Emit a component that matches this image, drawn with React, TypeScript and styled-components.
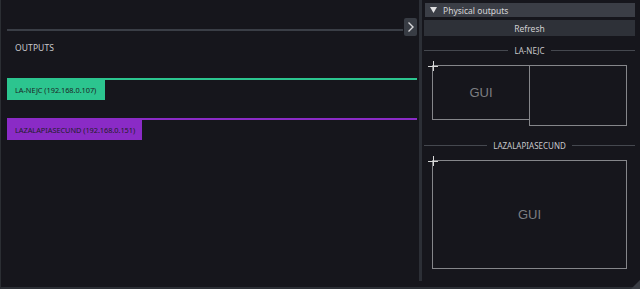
import React from "react";
import styled, { createGlobalStyle } from "styled-components";

const Global = createGlobalStyle`
  html, body { margin: 0; padding: 0; background: #16161c; }
  body { font-family: "Noto Sans", "DejaVu Sans", sans-serif; }
  * { box-sizing: border-box; }
`;

const Window = styled.div`
  width: 640px;
  height: 289px;
  background: #16161c;
  display: flex;
  flex-direction: column;
  overflow: hidden;
  border-left: 1px solid #2b2e33;
  position: relative;
`;

const Body = styled.div`
  flex: 1;
  display: flex;
  min-height: 0;
`;

const BottomEdge = styled.div`
  height: 2px;
  background: #2c2f35;
`;

const LeftPanel = styled.div`
  width: 418px;
  display: flex;
  flex-direction: column;
  padding-left: 6px;
`;

const TopRow = styled.div`
  display: flex;
  align-items: flex-end;
  margin-top: 18px;
  height: 18px;
`;

const TopLine = styled.div`
  flex: 1;
  height: 2px;
  background: #3a3e46;
  margin-bottom: 5px;
`;

const ChevronButton = styled.div`
  width: 13px;
  height: 18px;
  background: #383c44;
  border-radius: 2px;
  display: flex;
  align-items: center;
  justify-content: center;
  margin-left: 1px;
  margin-right: 2px;
`;

const SectionLabel = styled.div`
  color: #c9c9cc;
  font-size: 8.5px;
  letter-spacing: 0.1px;
  margin: 6px 0 0 8px;
  height: 12px;
  line-height: 12px;
`;

const OutputRow = styled.div<{ $color: string; $top: number }>`
  margin-top: ${(p) => p.$top}px;
  border-top: 2px solid ${(p) => p.$color};
  margin-right: 2px;
  display: flex;
`;

const OutputTag = styled.div<{ $color: string; $width: number }>`
  width: ${(p) => p.$width}px;
  height: 20px;
  background: ${(p) => p.$color};
  color: #1d1f26;
  font-family: "Noto Sans", sans-serif;
  font-size: 7.4px;
  letter-spacing: -0.05px;
  display: flex;
  align-items: center;
  padding-left: 8px;
  white-space: nowrap;
`;

const Separator = styled.div`
  width: 3px;
  height: 281px;
  background: #2c2f36;
`;

const RightPanel = styled.div`
  flex: 1;
  display: flex;
  flex-direction: column;
  padding: 3px 5px 0 2px;
`;

const Header = styled.div`
  height: 14px;
  background: #3b3e46;
  margin-left: 1px;
  display: flex;
  align-items: center;
  color: #d6d6d8;
  font-size: 8.5px;
  padding-left: 5px;
  gap: 6px;
`;

const RefreshButton = styled.div`
  margin-top: 3px;
  height: 16px;
  background: #2e3138;
  color: #d0d0d2;
  font-size: 8.5px;
  display: flex;
  align-items: center;
  justify-content: center;
`;

const Divider = styled.div<{ $top: number }>`
  margin-top: ${(p) => p.$top}px;
  display: flex;
  align-items: center;
  gap: 6px;
  color: #c8c8cb;
  font-size: 8px;
  height: 10px;
  &::before, &::after {
    content: "";
    flex: 1;
    height: 1px;
    background: #45484f;
  }
`;

const Canvas = styled.div<{ $height: number }>`
  position: relative;
  height: ${(p) => p.$height}px;
`;

const Screen = styled.div<{ $x: number; $y: number; $w: number; $h: number }>`
  position: absolute;
  left: ${(p) => p.$x}px;
  top: ${(p) => p.$y}px;
  width: ${(p) => p.$w}px;
  height: ${(p) => p.$h}px;
  border: 1.5px solid #85868a;
  display: flex;
  align-items: center;
  justify-content: center;
  color: #7d7e82;
  font-family: "Liberation Sans", Arial, sans-serif;
  font-size: 13px;
`;

const Cross = styled.div<{ $x: number; $y: number }>`
  position: absolute;
  left: ${(p) => p.$x - 5}px;
  top: ${(p) => p.$y - 5}px;
  width: 10px;
  height: 10px;
  &::before {
    content: "";
    position: absolute;
    left: 0;
    top: 5px;
    width: 10px;
    height: 1px;
    background: #d8d8d8;
  }
  &::after {
    content: "";
    position: absolute;
    left: 5px;
    top: 0;
    width: 1px;
    height: 10px;
    background: #d8d8d8;
  }
`;

const ResizeGrip = styled.div`
  position: absolute;
  right: 0;
  bottom: 0;
  width: 0;
  height: 0;
  border-left: 9px solid transparent;
  border-bottom: 9px solid #3a3d44;
`;

export default function App() {
  return (
    <>
      <Global />
      <Window>
        <Body>
          <LeftPanel>
            <TopRow>
              <TopLine />
              <ChevronButton>
                <svg width="8" height="12" viewBox="0 0 8 12">
                  <path d="M1.5 1.5 L6 6 L1.5 10.5" stroke="#d8d8da" strokeWidth="1.4" fill="none" />
                </svg>
              </ChevronButton>
            </TopRow>
            <SectionLabel>OUTPUTS</SectionLabel>
            <OutputRow $color="#2cc58f" $top={24}>
              <OutputTag $color="#2cc58f" $width={98}>LA-NEJC (192.168.0.107)</OutputTag>
            </OutputRow>
            <OutputRow $color="#8a2bc6" $top={18}>
              <OutputTag $color="#8a2bc6" $width={135}>LAZALAPIASECUND (192.168.0.151)</OutputTag>
            </OutputRow>
          </LeftPanel>
          <Separator />
          <RightPanel>
            <Header>
              <svg width="7" height="6" viewBox="0 0 7 6">
                <path d="M0 0 H7 L3.5 6 Z" fill="#e0e0e2" />
              </svg>
              Physical outputs
            </Header>
            <RefreshButton>Refresh</RefreshButton>
            <Divider $top={9}>LA-NEJC</Divider>
            <Canvas $height={84}>
              <Screen $x={8} $y={10} $w={98} $h={55}>GUI</Screen>
              <Screen $x={105} $y={10} $w={98} $h={61} />
              <Cross $x={9} $y={11} />
            </Canvas>
            <Divider $top={1}>LAZALAPIASECUND</Divider>
            <Canvas $height={124}>
              <Screen $x={8} $y={10} $w={195} $h={109}>GUI</Screen>
              <Cross $x={9} $y={11} />
            </Canvas>
          </RightPanel>
        </Body>
        <BottomEdge />
        <ResizeGrip />
      </Window>
    </>
  );
}
